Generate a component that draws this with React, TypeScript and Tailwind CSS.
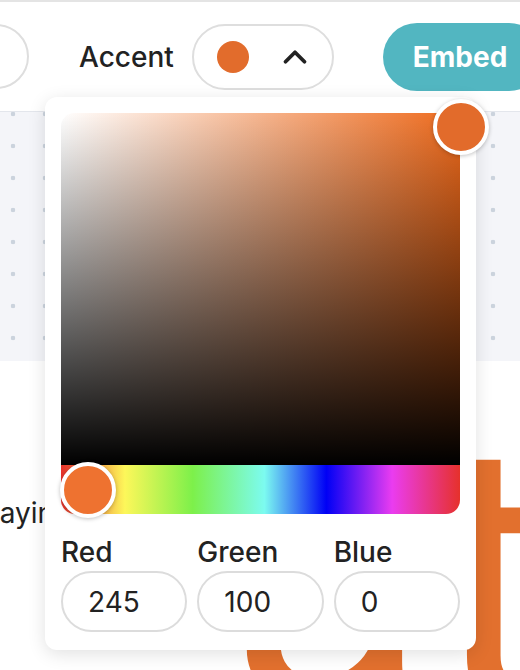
import { ChevronUp } from 'lucide-react';

const channels = [
  { label: 'Red', value: '245' },
  { label: 'Green', value: '100' },
  { label: 'Blue', value: '0' },
];

const ColorPopover = () => {
  return (
    <div className="absolute left-[45px] top-[97px] w-[431px] rounded-[12px] bg-white px-[16px] pt-[16px] pb-[18px] shadow-[0_4px_18px_rgba(0,0,0,0.12)]">
      <div className="relative h-[352px] rounded-t-[14px] bg-[linear-gradient(to_bottom,transparent,#000),linear-gradient(to_right,#fff,#ee6a1c)]">
        <div className="absolute left-[372px] top-[-14px] h-[56px] w-[56px] rounded-full border-[4px] border-white bg-[#e26b2b] shadow-[0_1px_4px_rgba(0,0,0,0.25)]" />
      </div>
      <div className="relative h-[49px] rounded-b-[14px] bg-[linear-gradient(to_right,#e6312b_0%,#fdf75a_16%,#7df04a_33%,#7cfbf0_51%,#0000f5_66.5%,#ea3cf0_83%,#e6312b_100%)]">
        <div className="absolute left-[-1px] top-[-3px] h-[56px] w-[56px] rounded-full border-[4px] border-white bg-[#ee7230] shadow-[0_1px_4px_rgba(0,0,0,0.25)]" />
      </div>
      <div className="mt-[21px] flex gap-[10px]">
        {channels.map((c) => (
          <div key={c.label} className="flex flex-1 flex-col">
            <span className="text-[28px] font-medium leading-[34px] text-[#222]">{c.label}</span>
            <div className="mt-[2px] flex h-[61px] items-center rounded-full border-2 border-[#dcdcdc] pl-[25px] text-[28px] text-[#222]">
              {c.value}
            </div>
          </div>
        ))}
      </div>
    </div>
  );
};

const App = () => {
  return (
    <div className="relative h-[670px] w-[520px] overflow-hidden bg-white font-['Inter',sans-serif]">
      <div className="flex h-[111px] items-center border-t-2 border-[#e4e4e4]">
        <div className="ml-[-112px] h-[65px] w-[141px] shrink-0 rounded-full border-2 border-[#dedede]" />
        <span className="ml-[50px] text-[28px] font-medium text-[#222]">Accent</span>
        <div className="ml-[18px] flex h-[66px] w-[142px] shrink-0 items-center rounded-full border-2 border-[#dedede] pl-[23px]">
          <span className="h-[32px] w-[32px] rounded-full bg-[#e26c2c]" />
          <ChevronUp className="ml-[27px] h-[38px] w-[38px] text-[#222]" strokeWidth={2.4} />
        </div>
        <div className="ml-[49px] flex h-[68px] w-[160px] shrink-0 items-center rounded-full bg-[#52b6c1] pl-[30px] text-[28px] font-bold text-white">
          Embed
        </div>
      </div>
      <div className="h-[250px] border-t border-[#e3e6ec] bg-[#f4f5f9] bg-[radial-gradient(circle,#cbd3dd_2px,transparent_2.6px)] bg-[size:32px_32px] bg-[position:-3px_-14px]" />
      <div className="flex h-[309px]">
        <p className="ml-[-25px] mt-[131px] w-[120px] shrink-0 whitespace-nowrap text-[28px] text-[#222]">Playing</p>
        <p className="ml-[132px] mt-[30px] shrink-0 whitespace-nowrap font-['Roboto',sans-serif] text-[372px] font-normal leading-none text-[#e2702e]">
          at
        </p>
      </div>
      <ColorPopover />
    </div>
  );
};

export default App;
